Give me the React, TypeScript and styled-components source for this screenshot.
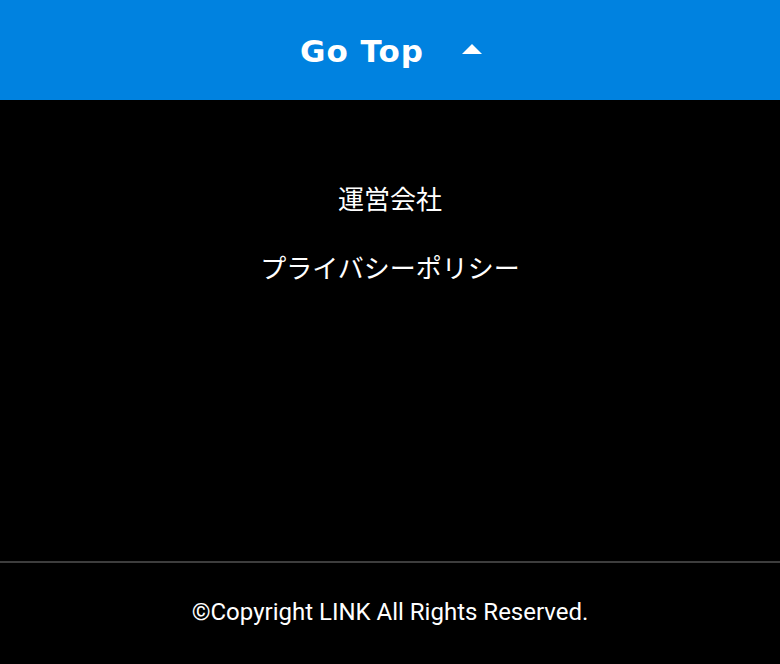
import React from "react";
import styled, { createGlobalStyle } from "styled-components";

const Global = createGlobalStyle`
  html, body { margin: 0; padding: 0; background: #000; }
  body { font-family: Roboto, "Noto Sans CJK JP", sans-serif; }
`;

const Page = styled.div`
  width: 780px;
  height: 664px;
  display: flex;
  flex-direction: column;
  background: #000;
`;

const TopBar = styled.a`
  height: 100px;
  background: #0082e0;
  display: flex;
  align-items: center;
  justify-content: center;
  gap: 38px;
  color: #fff;
  text-decoration: none;
  font-family: "DejaVu Sans", sans-serif;
  font-weight: 700;
  font-size: 31px;
  letter-spacing: 1px;
  padding-left: 2px;
  padding-top: 1px;
  box-sizing: border-box;
`;

const Arrow = styled.span`
  width: 0;
  height: 0;
  border-left: 10px solid transparent;
  border-right: 10px solid transparent;
  border-bottom: 10px solid #fff;
  margin-bottom: 4px;
`;

const Nav = styled.nav`
  flex: 1;
  display: flex;
  flex-direction: column;
  align-items: center;
  padding-top: 79px;
  gap: 32px;
  border-bottom: 2px solid #3d3d3d;
`;

const NavLink = styled.a`
  color: #fff;
  text-decoration: none;
  font-family: "Noto Sans CJK JP", sans-serif;
  font-size: 26px;
  line-height: 37px;
`;

const Footer = styled.footer`
  height: 101px;
  display: flex;
  align-items: center;
  justify-content: center;
  color: #fff;
  font-family: Roboto, sans-serif;
  font-size: 24px;
  padding-bottom: 4px;
  box-sizing: border-box;
`;

export default function App() {
  return (
    <Page>
      <Global />
      <TopBar href="#">
        <span>Go Top</span>
        <Arrow />
      </TopBar>
      <Nav>
        <NavLink href="#">運営会社</NavLink>
        <NavLink href="#">プライバシーポリシー</NavLink>
      </Nav>
      <Footer>©Copyright LINK All Rights Reserved.</Footer>
    </Page>
  );
}
